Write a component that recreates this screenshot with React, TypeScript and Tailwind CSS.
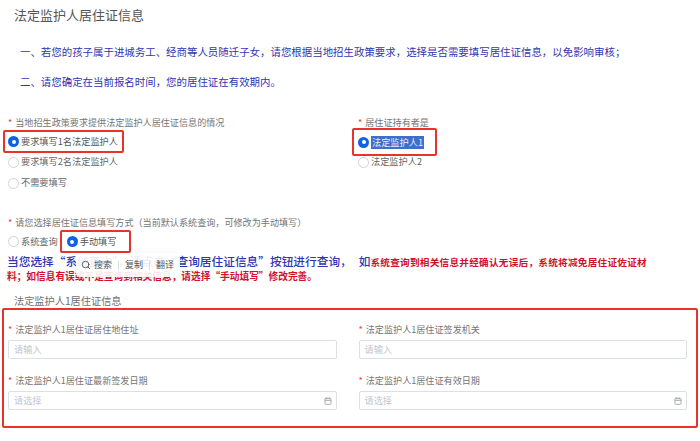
import { Calendar, Search } from 'lucide-react'

const FONT = "font-['Noto_Sans_CJK_SC','Noto_Sans',sans-serif]"

function Radio({ checked }: { checked?: boolean }) {
  if (checked) {
    return (
      <span className="flex h-[11px] w-[11px] shrink-0 items-center justify-center rounded-full bg-[#0f62e6]">
        <span className="h-[4px] w-[4px] rounded-full bg-white" />
      </span>
    )
  }
  return <span className="h-[11px] w-[11px] shrink-0 rounded-full border border-[#cfd3da] bg-white" />
}

function FieldLabel({ children }: { children: string }) {
  return (
    <div className="flex h-[14px] items-center gap-[3px] whitespace-nowrap text-[9.1px] leading-[14px] text-[#757575]">
      <span className="text-[#e8443a]">*</span>
      <span>{children}</span>
    </div>
  )
}

function TextField({ label, placeholder, date }: { label: string; placeholder: string; date?: boolean }) {
  return (
    <div>
      <FieldLabel>{label}</FieldLabel>
      <div className="mt-[4px] flex h-[19px] items-center justify-between rounded-[2px] border border-[#dcdfe6] bg-white pl-[5px] pr-[4px] text-[9.2px] text-[#c4c6cc]">
        <span>{placeholder}</span>
        {date && <Calendar size={8} strokeWidth={3} className="text-[#a9acb3]" />}
      </div>
    </div>
  )
}

export default function App() {
  return (
    <div className={`relative h-[441px] w-[700px] overflow-hidden bg-white ${FONT}`}>
      <h2 className="ml-[14px] pt-[5px] text-[13px] leading-[19px] text-[#555]">法定监护人居住证信息</h2>

      <div className="ml-[20px] mt-[20px] text-[10.45px] leading-[16px] text-[#2f36b0]">
        <p className="whitespace-nowrap">一、若您的孩子属于进城务工、经商等人员随迁子女，请您根据当地招生政策要求，选择是否需要填写居住证信息，以免影响审核；</p>
        <p className="mt-[14px] whitespace-nowrap">二、请您确定在当前报名时间，您的居住证在有效期内。</p>
      </div>

      <div className="mt-[25px] grid grid-cols-[344px_1fr] pl-[8px] pr-[13px]">
        <div>
          <FieldLabel>当地招生政策要求提供法定监护人居住证信息的情况</FieldLabel>
          <div className="-ml-[5px] mt-[1px] flex h-[23px] w-[121px] items-center gap-[2px] whitespace-nowrap rounded-[2px] border-2 border-[#e8322a] pl-[3px] text-[9.2px] text-[#555]">
            <Radio checked />
            <span>要求填写1名法定监护人</span>
          </div>
          <div className="mt-[2px] flex h-[14px] items-center gap-[2px] text-[9.2px] text-[#666]">
            <Radio />
            <span>要求填写2名法定监护人</span>
          </div>
          <div className="mt-[7px] flex h-[14px] items-center gap-[2px] text-[9.2px] text-[#666]">
            <Radio />
            <span>不需要填写</span>
          </div>
        </div>
        <div className="pl-[6px]">
          <FieldLabel>居住证持有者是</FieldLabel>
          <div className="-ml-[6px] -mt-[1px] flex h-[28px] w-[85px] items-center gap-[2px] rounded-[2px] border-2 border-[#e8322a] pl-[4px] text-[9.2px]">
            <Radio checked />
            <span className="bg-[#3f6fc9] px-px leading-[13px] text-[#e8eefa]">法定监护人1</span>
          </div>
          <div className="-mt-[1px] flex h-[14px] items-center gap-[2px] text-[9.2px] text-[#666]">
            <Radio />
            <span>法定监护人2</span>
          </div>
        </div>
      </div>

      <div className="ml-[8px] mt-[25px]">
        <FieldLabel>请您选择居住证信息填写方式（当前默认系统查询，可修改为手动填写）</FieldLabel>
        <div className="mt-[1px] flex items-center">
          <Radio />
          <span className="ml-[2px] text-[9.2px] text-[#666]">系统查询</span>
          <div className="ml-[2px] flex h-[23px] w-[71px] items-center gap-[2px] rounded-[2px] border-2 border-[#e8322a] pl-[5px] text-[9.2px] text-[#555]">
            <Radio checked />
            <span>手动填写</span>
          </div>
        </div>
      </div>

      <div className="ml-[7px] mt-[1px] w-[660px] font-medium">
        <p className="whitespace-nowrap text-[11.7px] leading-[14px] text-[#2f36b0]">
          当您选择“系统查询”，请点击“查询居住证信息”按钮进行查询，
          <span className="ml-[7px]">如</span>
          <span className="text-[9.65px] font-bold tracking-[0.25px] text-[#d0112b]">系统查询到相关信息并经确认无误后，系统将减免居住证佐证材</span>
        </p>
        <p className="whitespace-nowrap text-[9.7px] font-bold leading-[14px] text-[#d0112b]">
          料；如信息有误或不是查询到相关信息，请选择“手动填写”修改完善。
        </p>
      </div>

      <div className="absolute left-[76px] top-[253px] flex h-[24px] w-[104px] items-center whitespace-nowrap rounded-[4px] bg-white/90 pl-[5px] text-[9px] text-[#555] shadow-[0_0_6px_rgba(0,0,0,0.05)]">
        <Search size={10} strokeWidth={2} className="shrink-0 text-[#444]" />
        <span className="ml-[3px]">搜索</span>
        <span className="mx-[6px] h-[9px] w-px shrink-0 bg-[#ddd]" />
        <span>复制</span>
        <span className="mx-[6px] h-[9px] w-px shrink-0 bg-[#ddd]" />
        <span>翻译</span>
      </div>

      <h3 className="ml-[14px] mt-[11px] text-[10.2px] leading-[14px] text-[#707070]">法定监护人1居住证信息</h3>

      <div className="ml-[2px] h-[120px] w-[696px] rounded-[2px] border-2 border-[#e8322a] pl-[4px] pr-[9px] pt-[12px]">
        <div className="grid grid-cols-2 gap-x-[22px] gap-y-[14px]">
          <TextField label="法定监护人1居住证居住地住址" placeholder="请输入" />
          <TextField label="法定监护人1居住证签发机关" placeholder="请输入" />
          <TextField label="法定监护人1居住证最新签发日期" placeholder="请选择" date />
          <TextField label="法定监护人1居住证有效日期" placeholder="请选择" date />
        </div>
      </div>
    </div>
  )
}
